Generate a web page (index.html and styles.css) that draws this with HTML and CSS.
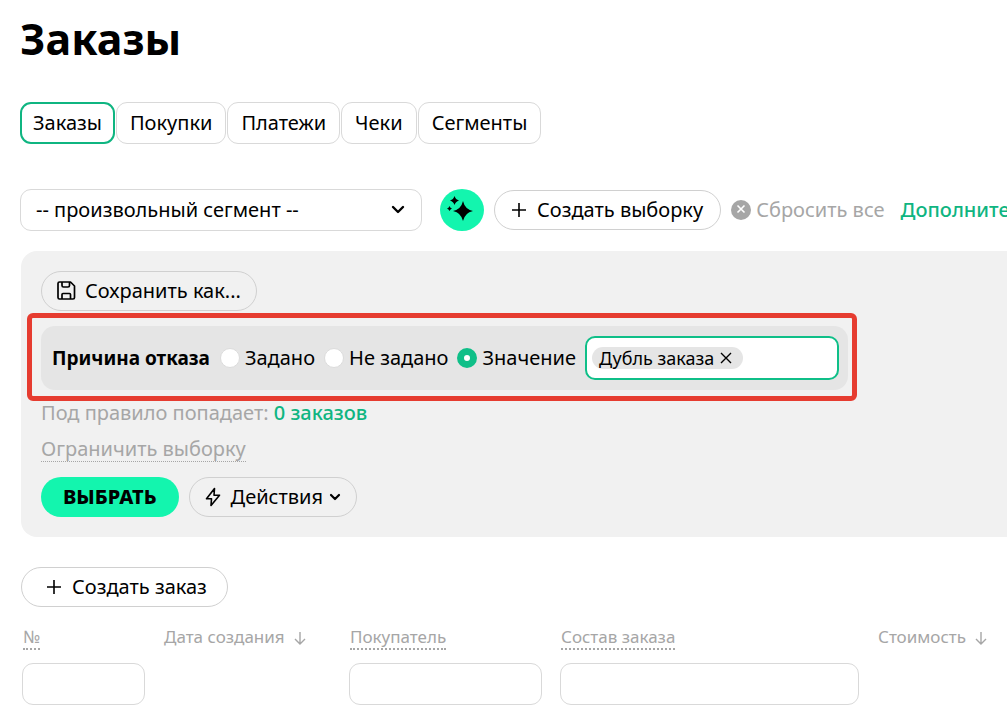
FILE: index.html
```html
<!DOCTYPE html>
<html lang="ru">

<head>
    <meta charset="UTF-8">
    <meta name="viewport" content="width=device-width, initial-scale=1.0">
    <title>Заказы</title>
    <link rel="stylesheet" href="styles.css">
</head>

<body>
    <main class="page">
        <h1>Заказы</h1>

        <nav class="tabs">
            <a class="tab active" href="#">Заказы</a>
            <a class="tab" href="#">Покупки</a>
            <a class="tab" href="#">Платежи</a>
            <a class="tab" href="#">Чеки</a>
            <a class="tab" href="#">Сегменты</a>
        </nav>

        <div class="toolbar">
            <div class="segment">
                <select class="segment-select" aria-label="Сегмент">
                    <option>-- произвольный сегмент --</option>
                </select>
                <svg class="segment-arrow" width="14" height="10" viewBox="0 0 14 10">
                    <path d="M2 2l5 5 5-5" fill="none" stroke="#000" stroke-width="2.4" stroke-linecap="round" stroke-linejoin="round" />
                </svg>
            </div>
            <button class="ai-btn" type="button" aria-label="Подобрать">
                <svg width="28" height="28" viewBox="0 0 28 28">
                    <path d="M16 5Q17.800 13.200 26 15Q17.800 16.800 16 25Q14.200 16.800 6 15Q14.200 13.200 16 5Z" />
                    <path d="M7.500 0Q8.500 3.500 12 4.500Q8.500 5.500 7.500 9Q6.500 5.500 3 4.500Q6.500 3.500 7.500 0Z" />
                    <path d="M2.500 10Q3.200 12 5 12.500Q3.200 13 2.500 15Q1.800 13 0 12.500Q1.800 12 2.500 10Z" />
                </svg>
            </button>
            <button class="btn btn-select" type="button">
                <svg width="16" height="16" viewBox="0 0 16 16">
                    <path d="M8 1v14M1 8h14" stroke="#000" stroke-width="1.600" />
                </svg>
                Создать выборку
            </button>
            <button class="reset" type="button">
                <svg width="20" height="20" viewBox="0 0 20 20">
                    <circle cx="10" cy="10" r="10" fill="#a6a6a6" />
                    <path d="M6.500 5.500l7 7M13.500 5.500l-7 7" stroke="#fff" stroke-width="1.600" />
                </svg>
                Сбросить все
            </button>
            <a class="more" href="#">Дополнительно</a>
        </div>

        <form class="filter">
            <button class="btn btn-save" type="button">
                <svg width="20" height="20" viewBox="0 0 20 20">
                    <path d="M2.500 1h11l4 4V16.500a1.500 1.500 0 0 1-1.500 1.500H2.500A1.500 1.500 0 0 1 1 16.500V2.500A1.500 1.500 0 0 1 2.500 1zM5 1V4.500q0 1.500 1.500 1.500h4.500q1.500 0 1.500-1.500V1M5 17.500v-4q0-1 1-1h6.500q1 0 1 1V17.500" fill="none" stroke="#000" stroke-width="1.700" stroke-linejoin="round" />
                </svg>
                Сохранить как...
            </button>

            <div class="rule">
                <b class="rule-name">Причина отказа</b>
                <label class="radio"><input type="radio" name="reason">Задано</label>
                <label class="radio"><input type="radio" name="reason">Не задано</label>
                <label class="radio"><input type="radio" name="reason" checked>Значение</label>
                <div class="tags">
                    <span class="tag">
                        Дубль заказа
                        <button class="tag-remove" type="button" aria-label="Удалить">
                            <svg width="12" height="12" viewBox="0 0 12 12">
                                <path d="M1 1l10 10M11 1L1 11" stroke="#000" stroke-width="1.400" />
                            </svg>
                        </button>
                    </span>
                    <input class="tags-input" type="text" aria-label="Значение">
                </div>
            </div>

            <p class="result">Под правило попадает: <a href="#">0 заказов</a></p>
            <a class="limit" href="#">Ограничить выборку</a>

            <div class="actions">
                <button class="btn btn-submit" type="submit">ВЫБРАТЬ</button>
                <button class="btn btn-actions" type="button">
                    <svg width="16" height="20" viewBox="0 0 16 20">
                        <path d="M9.500 1.500L1.500 11.800h5L6 18.500l8.500-10.300H9z" fill="none" stroke="#000" stroke-width="1.600" stroke-linejoin="round" />
                    </svg>
                    <span>Действия</span>
                    <svg width="12" height="9" viewBox="0 0 12 9">
                        <path d="M2 2l4 4 4-4" fill="none" stroke="#000" stroke-width="2.200" stroke-linecap="round" stroke-linejoin="round" />
                    </svg>
                </button>
            </div>
        </form>

        <button class="btn btn-order" type="button">
            <svg width="16" height="16" viewBox="0 0 16 16">
                <path d="M8 1v14M1 8h14" stroke="#000" stroke-width="1.600" />
            </svg>
            Создать заказ
        </button>

        <table class="orders">
            <colgroup>
                <col class="col-num">
                <col class="col-date">
                <col class="col-user">
                <col class="col-items">
                <col>
            </colgroup>
            <thead>
                <tr>
                    <th><a href="#">№</a></th>
                    <th>Дата создания
                        <svg width="12" height="13" viewBox="0 0 12 13">
                            <path d="M6 0v12M1 7l5 5 5-5" fill="none" stroke="#a6a6a6" stroke-width="1.400" />
                        </svg>
                    </th>
                    <th><a href="#">Покупатель</a></th>
                    <th><a href="#">Состав заказа</a></th>
                    <th>Стоимость
                        <svg width="12" height="13" viewBox="0 0 12 13">
                            <path d="M6 0v12M1 7l5 5 5-5" fill="none" stroke="#a6a6a6" stroke-width="1.400" />
                        </svg>
                    </th>
                </tr>
            </thead>
            <tbody>
                <tr>
                    <td><input type="text" aria-label="№"></td>
                    <td></td>
                    <td><input type="text" aria-label="Покупатель"></td>
                    <td><input type="text" aria-label="Состав заказа"></td>
                    <td></td>
                </tr>
            </tbody>
        </table>
    </main>
</body>

</html>
```
FILE: styles.css
```css
* {
    box-sizing: border-box;
}

body {
    margin: 0;
    background-color: #fff;
    color: #000;
    font-family: "Noto Sans", sans-serif;
    font-size: 20px;
    line-height: 24px;
    overflow-x: hidden;
}

button,
input,
select {
    font: inherit;
    color: inherit;
}

button {
    padding: 0;
    border: 0;
    background: none;
    cursor: pointer;
}

a {
    color: inherit;
    text-decoration: none;
}

svg {
    flex: none;
}

.page {
    padding: 11px 0 10px 20px;
}

h1 {
    margin: 0 0 35px;
    font-size: 43px;
    line-height: 56px;
}

.tabs {
    display: flex;
    gap: 1px;
    margin-bottom: 45px;
}

.tab {
    padding: 8px 13px;
    border: 1px solid #d9d9d9;
    border-radius: 11px;
}

.tab.active {
    padding: 7px 11px;
    border: 2px solid #0fb581;
}

.toolbar {
    display: flex;
    align-items: center;
    gap: 10px;
    margin-bottom: 20px;
    white-space: nowrap;
}

.segment {
    position: relative;
    flex: none;
    width: 402px;
    margin-right: 8px;
}

.segment-select {
    display: block;
    width: 100%;
    height: 42px;
    padding: 0 40px 0 15px;
    border: 1px solid #d9d9d9;
    border-radius: 11px;
    background-color: #fff;
    appearance: none;
}

.segment-arrow {
    position: absolute;
    top: 16px;
    right: 17px;
    pointer-events: none;
}

.ai-btn {
    display: flex;
    flex: none;
    align-items: center;
    justify-content: center;
    width: 44px;
    height: 42px;
    padding-right: 2px;
    border-radius: 50%;
    background-color: #13f5ae;
}

.btn {
    display: flex;
    flex: none;
    align-items: center;
    gap: 8px;
    height: 40px;
    padding: 0 15px;
    border: 1px solid #d0d0d0;
    border-radius: 20px;
}

.btn-select {
    gap: 10px;
    padding: 0 17px 0 16px;
}

.reset {
    display: flex;
    flex: none;
    align-items: center;
    gap: 5px;
    color: #a6a6a6;
}

.more {
    margin-left: 6px;
    color: #0fb581;
    font-weight: 500;
}

.filter {
    margin: 0 0 30px 1px;
    padding: 20px;
    border-radius: 16px 0 0 16px;
    background-color: #f1f1f1;
}

/* selected rule with the red frame around it */
.rule {
    position: relative;
    display: flex;
    align-items: center;
    gap: 9px;
    width: max-content;
    height: 64px;
    margin: 15px 0 11px;
    padding: 0 9px 0 11px;
    border-radius: 14px;
    background-color: #e5e5e5;
}

.rule::after {
    content: "";
    position: absolute;
    inset: -13px -9px -11px -14px;
    border: 5px solid #e63c30;
    border-radius: 6px;
    pointer-events: none;
}

.rule-name {
    margin-right: 1px;
    font-size: 19px;
}

.radio {
    display: flex;
    align-items: center;
    gap: 5px;
}

.radio input {
    width: 20px;
    height: 20px;
    margin: 0;
    border: 1px solid #dcdcdc;
    border-radius: 50%;
    background-color: #fff;
    appearance: none;
}

.radio input:checked {
    border: 7px solid #0fbf88;
}

.tags {
    display: flex;
    align-items: center;
    width: 254px;
    height: 44px;
    padding: 0 5px;
    border: 2px solid #0fbf88;
    border-radius: 10px;
    background-color: #fff;
}

.tag {
    display: flex;
    flex: none;
    align-items: center;
    gap: 6px;
    height: 22px;
    padding: 0 11px 0 7px;
    border-radius: 11px;
    background-color: #e5e5e5;
    font-size: 18px;
}

.tag-remove {
    display: flex;
}

.tags-input {
    flex: 1;
    min-width: 0;
    border: 0;
    background: none;
    outline: 0;
}

.result {
    margin: 0 0 12px;
    color: #a6a6a6;
}

.result a {
    color: #0fb581;
    font-weight: 500;
}

.limit {
    display: block;
    width: max-content;
    border-bottom: 1px dotted #a6a6a6;
    color: #a6a6a6;
}

.actions {
    display: flex;
    gap: 10px;
    margin-top: 15px;
}

.btn-submit {
    padding: 0 22px;
    border: 0;
    background-color: #13f5ae;
    font-weight: 800;
}

.btn-actions {
    gap: 10px;
}

.btn-actions span {
    margin-right: -4px;
}

.btn-order {
    gap: 10px;
    margin: 0 0 18px 1px;
    padding: 0 20px 0 24px;
}

.orders {
    width: 100%;
    margin-left: 2px;
    border-collapse: collapse;
    table-layout: fixed;
}

.col-num {
    width: 141px;
}

.col-date {
    width: 186px;
}

.col-user {
    width: 211px;
}

.col-items {
    width: 317px;
}

.orders th {
    padding: 0 0 13px 1px;
    color: #a6a6a6;
    font-size: 17px;
    font-weight: 400;
    line-height: 24px;
    text-align: left;
    vertical-align: top;
    white-space: nowrap;
}

.orders th a {
    display: inline-block;
    border-bottom: 2px dotted #a6a6a6;
    line-height: 22px;
}

.orders th svg {
    margin-left: 5px;
    vertical-align: -2px;
}

.orders td {
    padding: 0 18px 0 0;
}

.orders input {
    display: block;
    width: 100%;
    height: 42px;
    padding: 0 12px;
    border: 1px solid #d9d9d9;
    border-radius: 11px;
}
```
